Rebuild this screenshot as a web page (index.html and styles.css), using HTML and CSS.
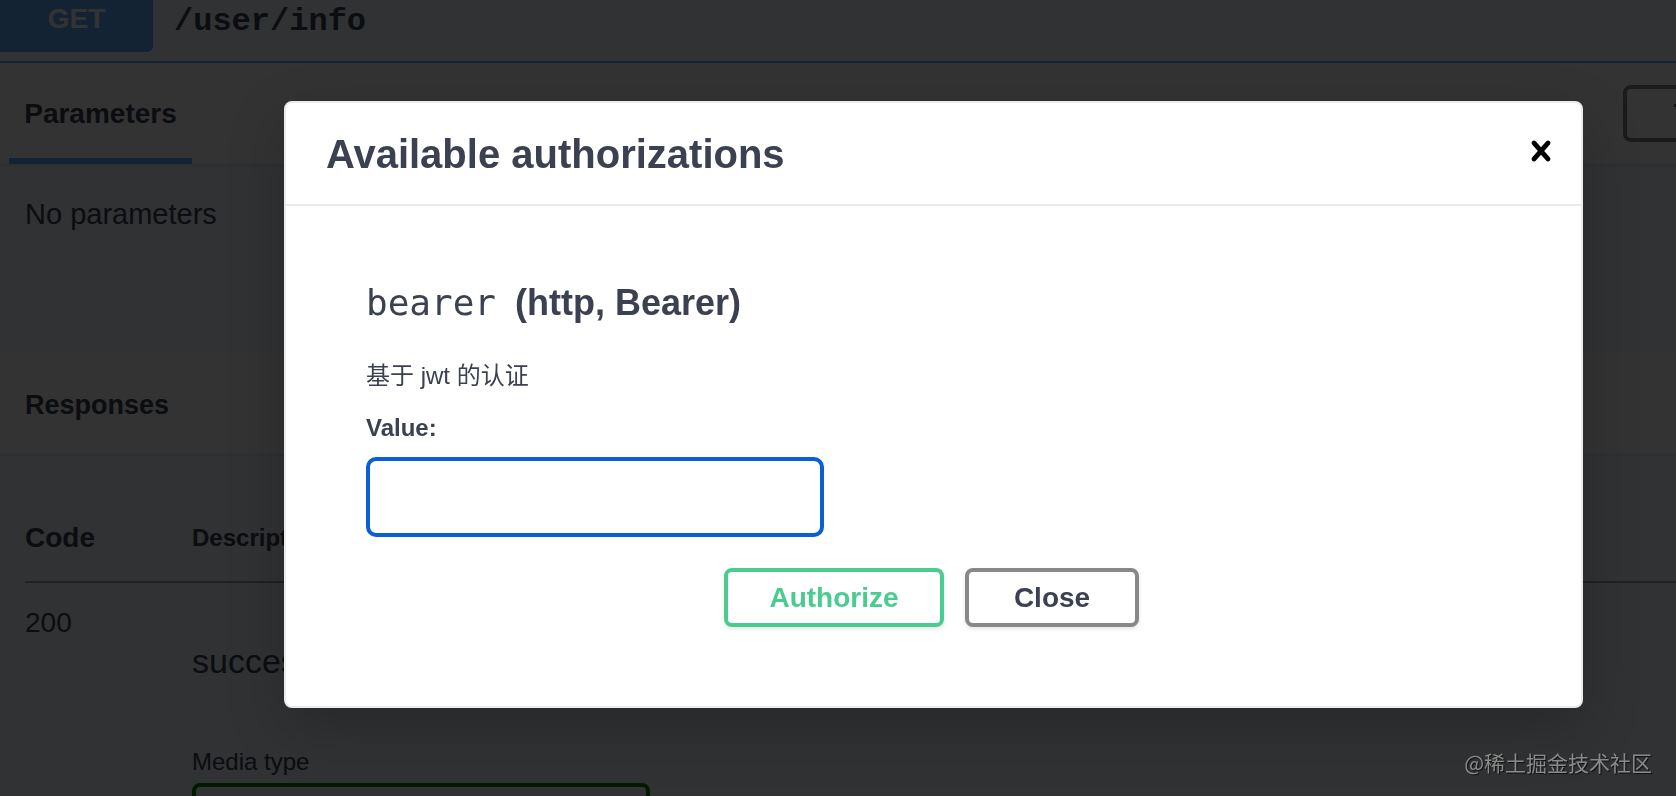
FILE: index.html
```html
<!DOCTYPE html>
<html lang="zh-CN">
<head>
<meta charset="utf-8">
<title>Swagger UI – Available authorizations</title>
<link rel="stylesheet" href="styles.css">
</head>
<body>
<div class="page">
  <div class="opblock">
    <div class="summary">
      <span class="method">GET</span>
      <span class="path">/user/info</span>
    </div>
    <div class="tab-header">
      <div class="tab-item"><h4>Parameters</h4></div>
      <button class="try-out">Try it out</button>
    </div>
    <div class="params-body">No parameters</div>
    <div class="section-header"><h4>Responses</h4></div>
    <div class="responses">
      <div class="resp-row resp-head">
        <div class="col-code">Code</div>
        <div class="col-desc">Description</div>
      </div>
      <div class="resp-row resp-body">
        <div class="col-code">200</div>
        <div class="col-desc">
          <p class="success">success</p>
          <div class="media-label">Media type</div>
          <div class="media-select"></div>
        </div>
      </div>
    </div>
  </div>
</div>

<div class="backdrop"></div>

<div class="modal" role="dialog" aria-label="Available authorizations">
  <div class="modal-header">
    <h3>Available authorizations</h3>
    <button class="close-modal" aria-label="Close">
      <svg width="40" height="40" viewBox="0 0 20 20" aria-hidden="true"><path d="M14.348 14.849c-.469.469-1.229.469-1.697 0L10 11.819l-2.651 3.029c-.469.469-1.229.469-1.697 0-.469-.469-.469-1.229 0-1.697l2.758-3.15-2.759-3.152c-.469-.469-.469-1.228 0-1.697.469-.469 1.228-.469 1.697 0L10 8.183l2.651-3.031c.469-.469 1.228-.469 1.697 0 .469.469.469 1.229 0 1.697l-2.758 3.152 2.758 3.15c.469.469.469 1.229 0 1.698z"/></svg>
    </button>
  </div>
  <div class="modal-content">
    <h4 class="auth-title"><code>bearer</code>&nbsp;(http, Bearer)</h4>
    <p class="auth-desc">基于 jwt 的认证</p>
    <label class="auth-label" for="auth-value">Value:</label>
    <input class="auth-input" id="auth-value" type="text">
    <div class="auth-btns">
      <button class="btn btn-authorize">Authorize</button>
      <button class="btn btn-close">Close</button>
    </div>
  </div>
</div>

<div class="watermark">@稀土掘金技术社区</div>
</body>
</html>
```

FILE: styles.css
```css
* { box-sizing: border-box; }

html, body {
  margin: 0;
  height: 100%;
  overflow: hidden;
}

body {
  font-family: "Liberation Sans", Arial, "Noto Sans CJK SC", sans-serif;
  color: #3b4151;
  background: #fff;
}

/* ---------- underlying swagger page ---------- */
.page {
  width: 1853px;
}

.opblock {
  background: #eff7ff;
  min-height: 900px;
}

.summary {
  display: flex;
  align-items: flex-start;
  height: 63px;
  border-bottom: 2px solid #61affe;
}

.method {
  width: 153px;
  height: 52px;
  padding-top: 3px;
  background: #61affe;
  color: #fff;
  font-size: 28px;
  font-weight: 700;
  line-height: 32px;
  text-align: center;
  border-radius: 0 0 6px 0;
}

.path {
  margin-left: 21px;
  font-family: "Liberation Mono", "Courier New", monospace;
  font-weight: 700;
  font-size: 32px;
  line-height: 44px;
  color: #3b4151;
}

.tab-header {
  display: flex;
  align-items: stretch;
  height: 101px;
  background: rgba(255, 255, 255, .8);
  box-shadow: 0 1px 2px rgba(0, 0, 0, .1);
}

.tab-item {
  margin-left: 9px;
  width: 183px;
  padding-top: 6px;
  display: flex;
  align-items: center;
  justify-content: center;
  border-bottom: 6px solid #61affe;
}

.tab-item h4,
.section-header h4 {
  margin: 0;
  font-size: 28px;
  font-weight: 700;
  line-height: 32px;
}

.section-header h4 {
  font-size: 27px;
}

.try-out {
  margin-left: auto;
  margin-right: 10px;
  align-self: center;
  width: 220px;
  height: 57px;
  padding: 0;
  border: 4px solid #888;
  border-radius: 8px;
  background: transparent;
  font: 700 28px "Liberation Sans", Arial, sans-serif;
  color: #3b4151;
}

.params-body {
  height: 188px;
  padding: 34px 25px 0;
  font-size: 29px;
  line-height: 32px;
}

.section-header {
  height: 102px;
  padding: 4px 25px 0;
  display: flex;
  align-items: center;
  background: rgba(255, 255, 255, .8);
  box-shadow: 0 1px 2px rgba(0, 0, 0, .1);
}

.responses {
  padding: 0 25px;
}

.resp-row {
  display: flex;
}

.col-code {
  width: 167px;
  flex-shrink: 0;
  font-size: 28px;
  line-height: 32px;
}

.resp-head {
  padding: 68px 0 27px;
  border-bottom: 2px solid #a0a3aa;
}

.resp-head .col-code {
  font-weight: 700;
}

.resp-head .col-desc {
  font-size: 24px;
  font-weight: 700;
  line-height: 32px;
}

.resp-body {
  padding-top: 24px;
}

.success {
  margin: 34px 0 0;
  font-size: 34px;
  line-height: 40px;
}

.media-label {
  margin-top: 67px;
  font-size: 24px;
  line-height: 28px;
}

.media-select {
  margin-top: 7px;
  width: 458px;
  height: 60px;
  border: 4px solid green;
  border-radius: 8px;
}

/* ---------- overlay + dialog ---------- */
.backdrop {
  position: fixed;
  inset: 0;
  background: rgba(0, 0, 0, .8);
}

.modal {
  position: absolute;
  left: 284px;
  top: 101px;
  width: 1299px;
  background: #fff;
  border: 2px solid #ebebeb;
  border-radius: 8px;
  box-shadow: 0 20px 60px rgba(0, 0, 0, .2);
}

.modal-header {
  display: flex;
  align-items: center;
  height: 103px;
  border-bottom: 2px solid #ebebeb;
}

.modal-header h3 {
  flex: 1;
  margin: 0;
  padding: 0 40px;
  font-size: 40px;
  font-weight: 700;
  line-height: 46px;
  color: #3b4151;
}

.close-modal {
  display: flex;
  margin-bottom: 6px;
  padding: 0 20px;
  border: 0;
  background: none;
}

.close-modal svg {
  fill: #000;
}

.modal-content {
  display: flex;
  flex-direction: column;
  align-items: flex-start;
  padding: 76px 80px 79px;
}

.auth-title {
  margin: 0;
  font-size: 36px;
  font-weight: 700;
  line-height: 42px;
  color: #3b4151;
}

.auth-title code {
  margin-right: 9px;
  font-family: "DejaVu Sans Mono", "Liberation Mono", monospace;
  font-weight: 400;
  font-size: 36px;
}

.auth-desc {
  margin: 36px 0 0;
  font-size: 24px;
  line-height: 32px;
  font-family: "Liberation Sans", "Noto Sans CJK SC", sans-serif;
}

.auth-label {
  margin-top: 20px;
  font-size: 24px;
  font-weight: 700;
  line-height: 32px;
}

.auth-input {
  margin-top: 13px;
  width: 458px;
  height: 80px;
  padding: 0 20px;
  border: 4px solid #0a60d3;
  border-radius: 10px;
  outline: none;
  font-size: 24px;
  background: #fff;
}

.auth-btns {
  align-self: stretch;
  display: flex;
  justify-content: center;
  gap: 21px;
  margin-top: 31px;
  padding-right: 4px;
}

.btn {
  height: 59px;
  padding: 0;
  border: 4px solid #888;
  border-radius: 8px;
  background: #fff;
  font: 700 28px/1 "Liberation Sans", Arial, sans-serif;
  box-shadow: 0 2px 4px rgba(0, 0, 0, .1);
}

.btn-authorize {
  width: 220px;
  border-color: #49cc90;
  color: #49cc90;
}

.btn-close {
  width: 174px;
  color: #3b4151;
}

.watermark {
  position: absolute;
  right: 24px;
  bottom: 20px;
  font-family: "Noto Sans CJK SC", sans-serif;
  font-size: 21px;
  line-height: 28px;
  color: #8a8a8a;
  text-shadow: 1px 1px 1px rgba(0, 0, 0, .7);
}
```
